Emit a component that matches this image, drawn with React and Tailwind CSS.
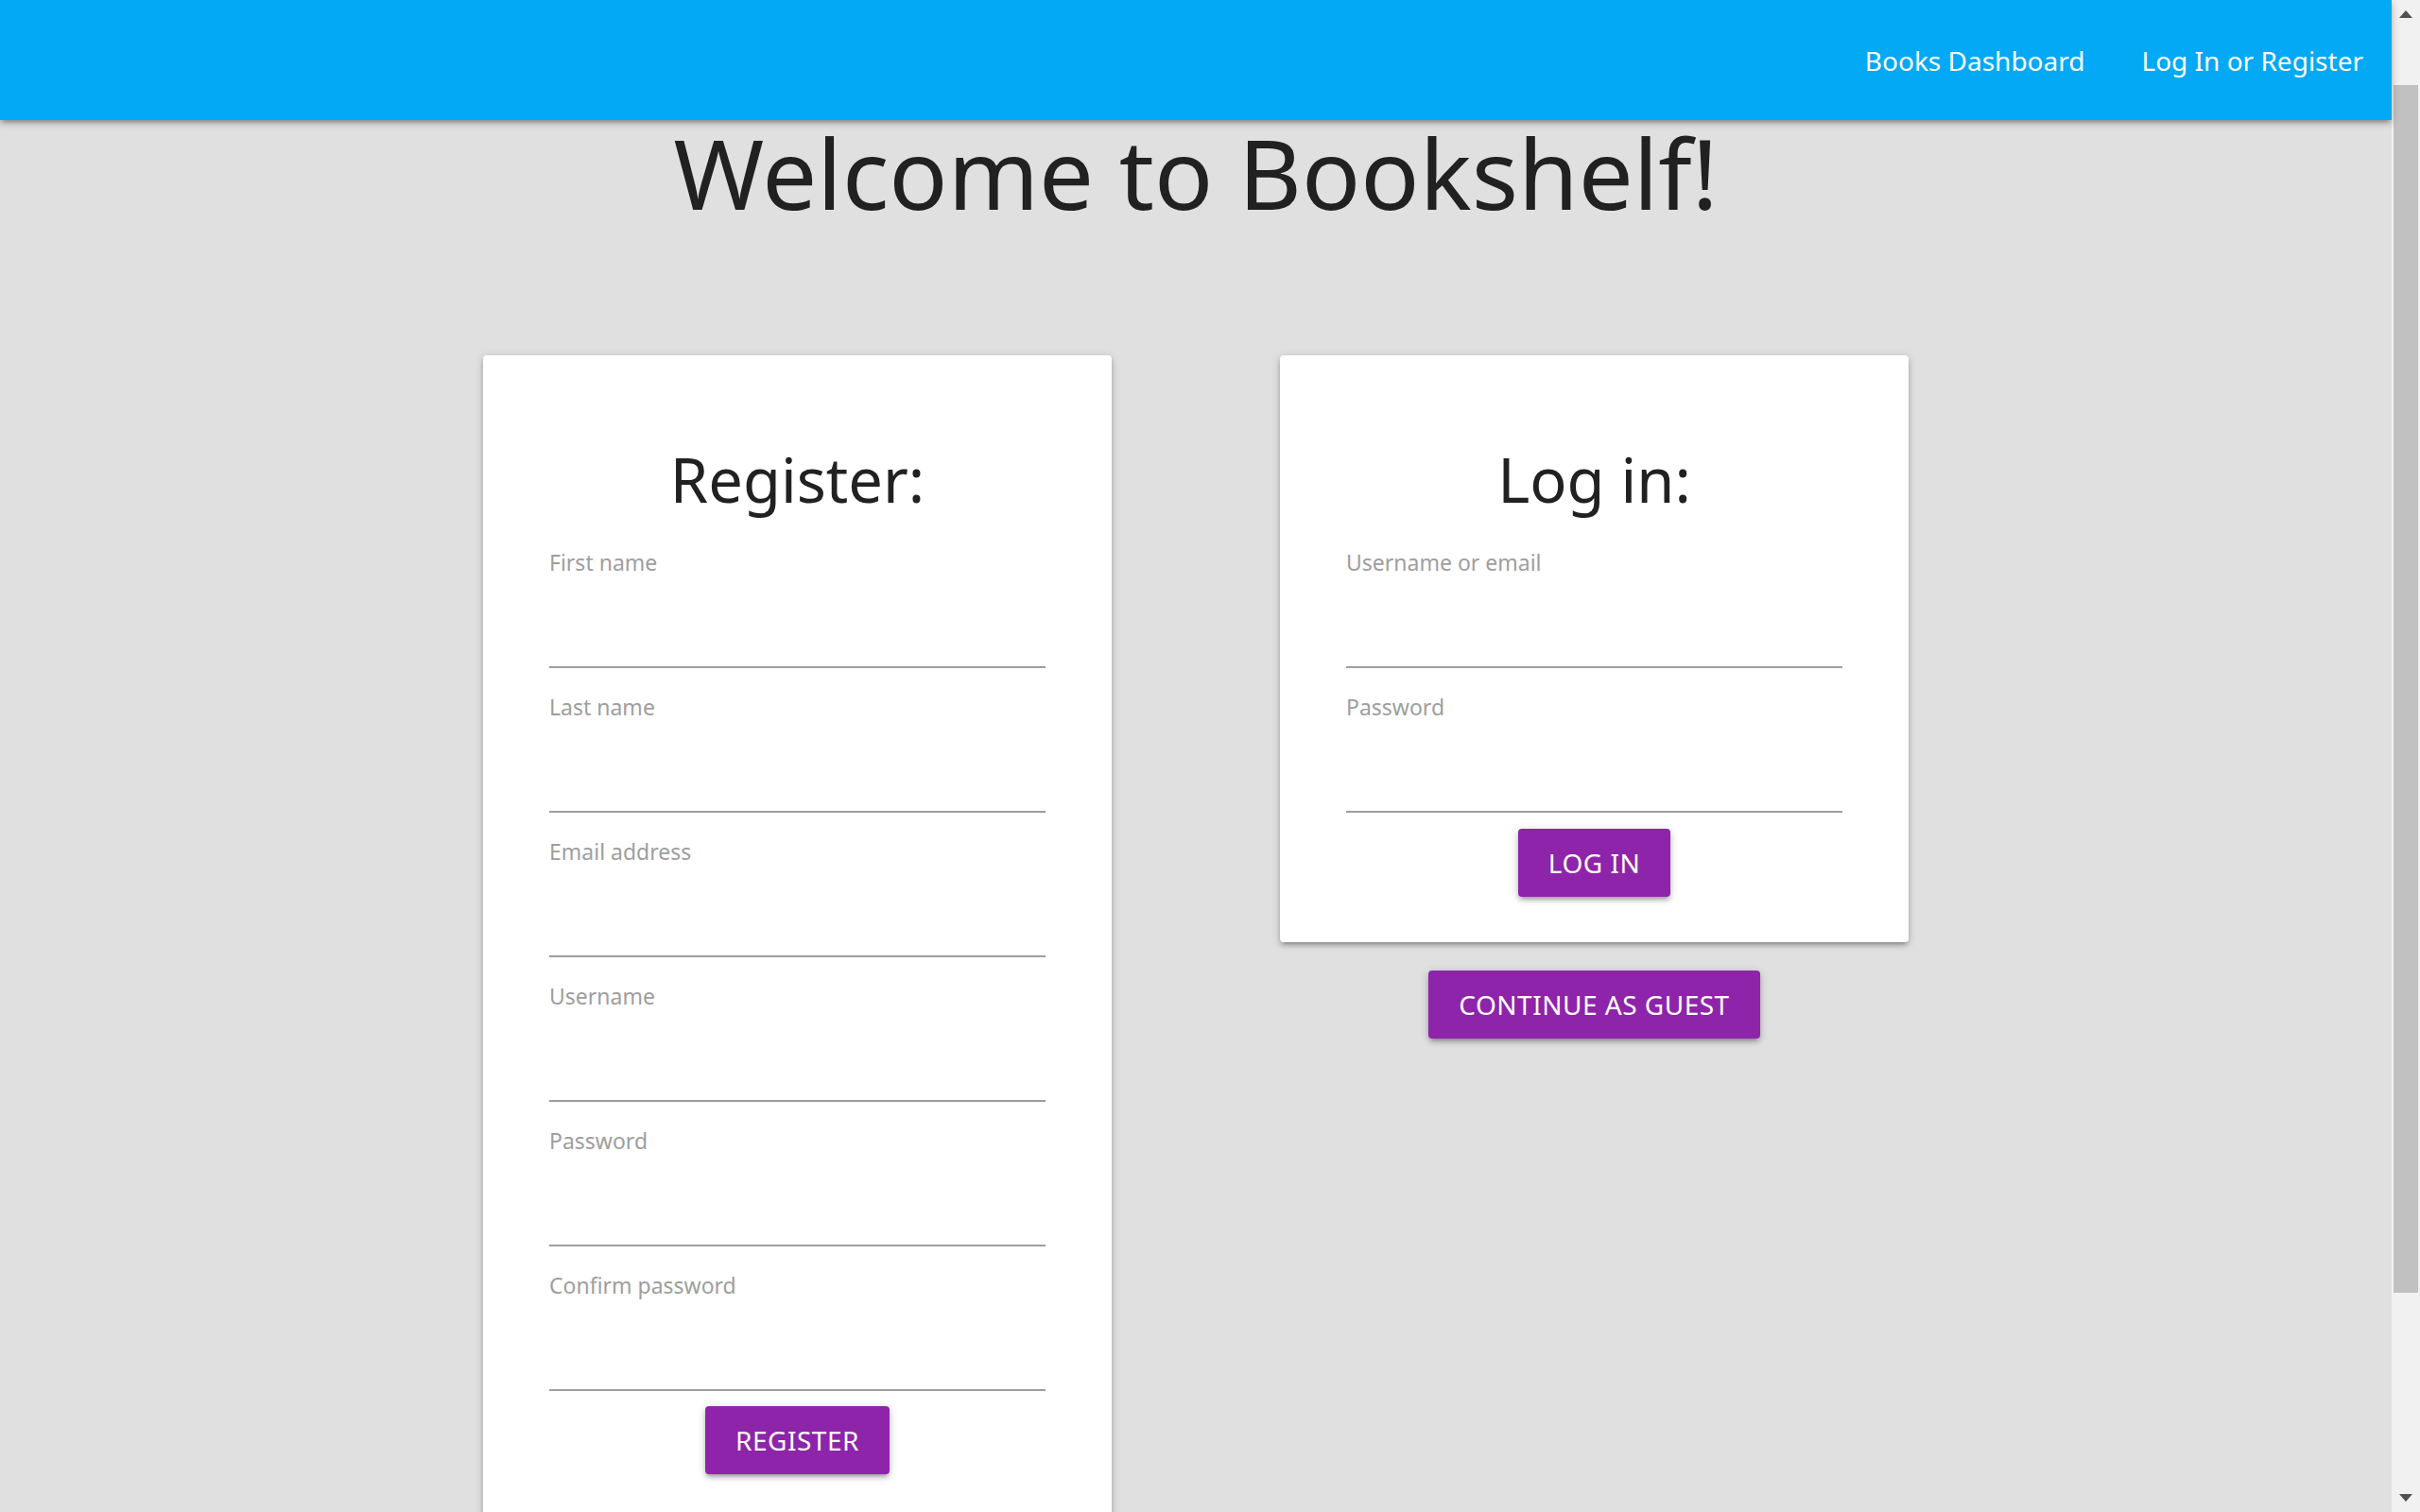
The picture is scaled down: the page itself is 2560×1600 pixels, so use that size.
const shadow =
  "shadow-[0_4px_4px_0_rgba(0,0,0,0.14),0_6px_2px_-4px_rgba(0,0,0,0.12),0_2px_10px_0_rgba(0,0,0,0.2)]";

function Field({ label, type = "text", first }) {
  return (
    <div className={first ? "mt-[39px]" : "mt-[29px]"}>
      <label className="block text-[23px] leading-[24px] text-[#9e9e9e]">{label}</label>
      <input
        type={type}
        className="mt-[20px] block h-[80px] w-full border-b-2 border-[#9e9e9e] bg-transparent outline-none"
      />
    </div>
  );
}

function PurpleButton({ children, className = "" }) {
  return (
    <button
      className={`h-[72px] rounded-[4px] bg-[#8e24aa] px-[32px] text-[28px] uppercase leading-[72px] tracking-[0.5px] text-white ${shadow} ${className}`}
    >
      {children}
    </button>
  );
}

function Card({ title, children }) {
  return (
    <div className={`w-[665px] rounded-[4px] bg-white px-[70px] pb-[48px] pt-[48px] ${shadow}`}>
      <h4 className="mt-[48px] text-center text-[65px] leading-[1.1] text-[#212121]">{title}</h4>
      {children}
    </div>
  );
}

function Scrollbar() {
  return (
    <div className="flex w-[30px] shrink-0 flex-col items-center bg-[#f1f1f1]">
      <div className="flex h-[30px] w-full items-center justify-center">
        <svg width="14" height="8" viewBox="0 0 14 8">
          <path d="M7 0 L14 8 L0 8 Z" fill="#505050" />
        </svg>
      </div>
      <div className="mt-[60px] h-[1278px] w-[26px] bg-[#c1c1c1]" />
      <div className="flex-1" />
      <div className="flex h-[30px] w-full items-center justify-center">
        <svg width="14" height="8" viewBox="0 0 14 8">
          <path d="M0 0 L14 0 L7 8 Z" fill="#505050" />
        </svg>
      </div>
    </div>
  );
}

export default function App() {
  return (
    <div className="flex h-[1600px] w-full overflow-hidden bg-[#e0e0e0] font-['Noto_Sans',sans-serif]">
      <div className="flex min-w-0 flex-1 flex-col">
        <nav className={`relative z-10 flex h-[127px] shrink-0 items-center justify-end bg-[#03a9f4] ${shadow}`}>
          <a className="px-[30px] text-[28px] text-white">Books Dashboard</a>
          <a className="px-[30px] text-[28px] text-white">Log In or Register</a>
        </nav>

        <h1 className="mt-[4px] text-center text-[103px] leading-none text-[#212121]">Welcome to Bookshelf!</h1>

        <div className="mt-[142px] flex items-start justify-center gap-[178px]">
          <Card title="Register:">
            <Field label="First name" first />
            <Field label="Last name" />
            <Field label="Email address" type="email" />
            <Field label="Username" />
            <Field label="Password" type="password" />
            <Field label="Confirm password" type="password" />
            <div className="mt-[16px] flex justify-center">
              <PurpleButton>Register</PurpleButton>
            </div>
          </Card>

          <div className="flex flex-col items-center">
            <Card title="Log in:">
              <Field label="Username or email" first />
              <Field label="Password" type="password" />
              <div className="mt-[17px] flex justify-center">
                <PurpleButton>Log in</PurpleButton>
              </div>
            </Card>
            <PurpleButton className="mt-[30px]">Continue as guest</PurpleButton>
          </div>
        </div>
      </div>
      <Scrollbar />
    </div>
  );
}
